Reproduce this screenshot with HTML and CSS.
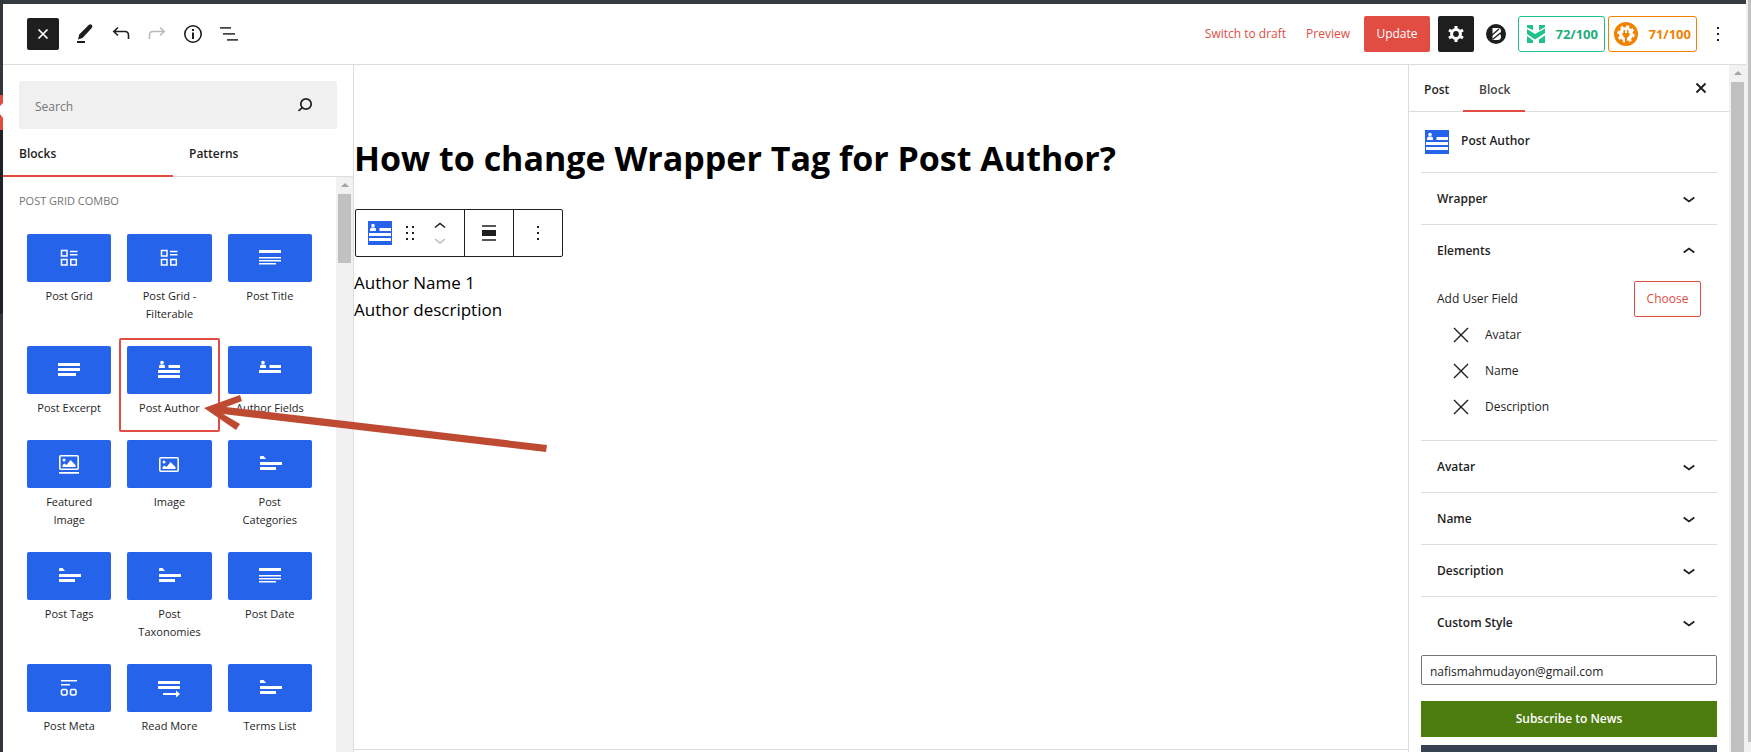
FILE: index.html
```html
<!DOCTYPE html>
<html lang="en">
<head>
<meta charset="utf-8">
<title>Edit Post</title>
<link rel="stylesheet" href="styles.css">
</head>
<body>
<svg class="defs" aria-hidden="true">
  <symbol id="grid" viewBox="0 0 24 24"><path fill="none" stroke="#fff" stroke-width="1.500" d="M4.500 4.500h5.500v5.500h-5.500zM4.500 13.500h5.500v5.500h-5.500zM13.800 13.500h5.500v5.500h-5.500zM13 5.500h7.500M13 8.800h7.500"/></symbol>
  <symbol id="title" viewBox="0 0 24 24"><path fill="#fff" d="M1 4h22v3H1zM1 11h22v1.400H1zM1 14h22v1.400H1zM1 17h17v1.400H1z"/></symbol>
  <symbol id="excerpt" viewBox="0 0 24 24"><path fill="#fff" d="M1 5h22v3H1zM1 10h22v3H1zM1 15h18v3H1z"/></symbol>
  <symbol id="author" viewBox="0 0 24 24"><circle cx="5" cy="4.500" r="1.800" fill="#fff"/><path fill="#fff" d="M2 10V8.500q0-2 2-2h2q2 0 2 2V10zM11.500 7H23v3H11.500zM1 12h22v3H1zM1 17h22v3H1z"/></symbol>
  <symbol id="fields" viewBox="0 0 24 24"><circle cx="5" cy="4.500" r="1.800" fill="#fff"/><path fill="#fff" d="M2 10V8.500q0-2 2-2h2q2 0 2 2V10zM11.500 7H23v3H11.500zM1 12h22v3H1z"/></symbol>
  <symbol id="featured" viewBox="0 0 24 24"><rect x="2.800" y="3.800" width="18.400" height="13.400" rx="1" fill="none" stroke="#fff" stroke-width="1.600"/><circle cx="7" cy="8" r="1.500" fill="#fff"/><path fill="#fff" d="M5.500 15v-2l2-1.500 2 1.500 4-5 5 5v2zM2 20h20v1.800H2z"/></symbol>
  <symbol id="image" viewBox="0 0 24 24"><rect x="2.800" y="5.800" width="18.400" height="13.400" rx="1" fill="none" stroke="#fff" stroke-width="1.600"/><circle cx="7" cy="10" r="1.500" fill="#fff"/><path fill="#fff" d="M5.500 17v-2l2-1.500 2 1.500 4-5 5 5v2z"/></symbol>
  <symbol id="terms" viewBox="0 0 24 24"><path fill="#fff" d="M2 7V5q0-1 1-1h2.500L8 7zM2 10h22v3H2zM2 15h16v3H2z"/></symbol>
  <symbol id="meta" viewBox="0 0 24 24"><path fill="#fff" d="M4 4h16v1.500H4zM4 8h9v1.500H4z"/><path fill="none" stroke="#fff" stroke-width="1.600" d="M5.500 13.500h3.500l1 1v3.500l-1 1h-3.500l-1-1v-3.500zM14.500 13.500h3.500l1 1v3.500l-1 1h-3.500l-1-1v-3.500z"/></symbol>
  <symbol id="more" viewBox="0 0 24 24"><path fill="#fff" d="M1 5h22v3H1zM1 10h22v3H1zM6 17h13v-2.500l4 3.500-4 3.500V19H6z"/></symbol>
  <symbol id="chev" viewBox="0 0 24 24"><path fill="none" stroke="#1e1e1e" stroke-width="1.700" d="M6.700 10.500l5.300 4 5.300-4"/></symbol>
  <symbol id="remove" viewBox="0 0 24 24"><path fill="none" stroke="#1e1e1e" stroke-width="1.400" d="M5 5l14 14M19 5L5 19"/></symbol>
  <symbol id="dots" viewBox="0 0 24 24"><path fill="#1e1e1e" d="M11 5h2v2h-2zM11 11h2v2h-2zM11 17h2v2h-2z"/></symbol>
</svg>
<div class="page">
  <div class="rail"><span class="rail-current"></span><span class="rail-sub"></span></div>
  <div class="editor">
    <header class="header">
      <div class="tools">
        <button class="square" aria-label="Close inserter"><svg viewBox="0 0 24 24" width="24" height="24"><path fill="none" stroke="#fff" stroke-width="1.700" d="M7.500 7.500l9 9M16.500 7.500l-9 9"/></svg></button>
        <button class="tool" aria-label="Tools"><svg viewBox="0 0 24 24" width="24" height="24"><path fill="#1e1e1e" d="M5 17.500l1.200-5L16 2.800q1.300-1 2.800.200 1.200 1.300.200 2.700L9.500 16zM4 19h8v2H4z"/></svg></button>
        <button class="tool" aria-label="Undo"><svg viewBox="0 0 24 24" width="24" height="24"><path fill="none" stroke="#1e1e1e" stroke-width="1.600" d="M9 5.500L4.800 9.500 9 13.500M5 9.500h11q3.500 0 3.500 4V17"/></svg></button>
        <button class="tool faded" aria-label="Redo"><svg viewBox="0 0 24 24" width="24" height="24"><path fill="none" stroke="#1e1e1e" stroke-width="1.600" d="M15 5.500l4.200 4-4.200 4M19 9.500H8q-3.500 0-3.500 4V17"/></svg></button>
        <button class="tool" aria-label="Details"><svg viewBox="0 0 24 24" width="24" height="24"><circle cx="12" cy="12" r="8.200" fill="none" stroke="#1e1e1e" stroke-width="1.600"/><path fill="#1e1e1e" d="M11 7h2v2h-2zM11 10.500h2V17h-2z"/></svg></button>
        <button class="tool" aria-label="List view"><svg viewBox="0 0 24 24" width="24" height="24"><path fill="#444" d="M3 5h11v1.800H3zM6 11h12v1.800H6zM10 17h11v1.800H10z"/></svg></button>
      </div>
      <div class="actions">
        <button class="text-btn">Switch to draft</button>
        <button class="text-btn">Preview</button>
        <button class="update">Update</button>
        <button class="settings" aria-label="Settings"><svg viewBox="0 0 24 24" width="24" height="24"><circle cx="12" cy="12" r="4.400" fill="none" stroke="#fff" stroke-width="3"/><path fill="none" stroke="#fff" stroke-width="3" d="M12 4v3M12 17v3M5 8l2.600 1.500M16.400 14.500L19 16M5 16l2.600-1.500M16.400 9.500L19 8"/></svg></button>
        <button class="bicon" aria-label="Blocks plugin"><svg viewBox="0 0 24 24" width="24" height="24"><circle cx="12" cy="12" r="10" fill="#1e1e1e"/><path fill="#fff" d="M8.500 6H14q3 0 3 3 0 1.800-1.500 2.600 1.500.900 1.500 2.900 0 3.500-3.500 3.500h-5z"/><path fill="none" stroke="#1e1e1e" stroke-width="1.300" d="M7 14l8-7M8.500 17.500l8-6.500"/></svg></button>
        <button class="score green"><svg viewBox="0 0 20 20" width="20" height="20"><path fill="#1fc28b" d="M1 1h6v5L1 3.500zM13 1h6v2l-6 3.500zM1 5l8 5L19 4.500v4.500L9 15.500 1 10zM1 12l6 4.500V19H1zM19 11.500V19h-6v-3.500z"/></svg><span>72/100</span></button>
        <button class="score orange"><svg viewBox="0 0 24 24" width="24" height="24"><circle cx="12" cy="12" r="12" fill="#f18200"/><circle cx="12" cy="12" r="7" fill="#fff"/><circle cx="12" cy="12" r="7.500" fill="none" stroke="#fff" stroke-width="2.500" stroke-dasharray="3 2.890"/><path fill="#f18200" d="M8.500 11h7v2.500l-2.500 2.500V21h-2v-5L8.500 13.500zM9.500 8H11v3H9.500zM13 8h1.500v3H13z"/></svg><span>71/100</span></button>
        <button class="kebab" aria-label="Options"><svg width="24" height="24"><use href="#dots"/></svg></button>
      </div>
    </header>
    <div class="body">
      <aside class="inserter">
        <div class="search">
          <input type="text" placeholder="Search" aria-label="Search">
          <svg viewBox="0 0 24 24" width="24" height="24"><circle cx="13" cy="11" r="5.200" fill="none" stroke="#1e1e1e" stroke-width="1.700"/><path stroke="#1e1e1e" stroke-width="1.700" d="M9.300 14.700L5.500 17.800"/></svg>
        </div>
        <div class="tabs"><button class="tab on">Blocks</button><button class="tab">Patterns</button></div>
        <div class="scroller">
          <div class="blocks">
            <h2>Post Grid Combo</h2>
            <div class="tiles">
              <button class="tile"><span class="pic"><svg width="24" height="24"><use href="#grid"/></svg></span>Post Grid</button>
              <button class="tile"><span class="pic"><svg width="24" height="24"><use href="#grid"/></svg></span>Post Grid - Filterable</button>
              <button class="tile"><span class="pic"><svg width="24" height="24"><use href="#title"/></svg></span>Post Title</button>
              <button class="tile"><span class="pic"><svg width="24" height="24"><use href="#excerpt"/></svg></span>Post Excerpt</button>
              <button class="tile picked"><span class="pic"><svg width="24" height="24"><use href="#author"/></svg></span>Post Author</button>
              <button class="tile"><span class="pic"><svg width="24" height="24"><use href="#fields"/></svg></span>Author Fields</button>
              <button class="tile"><span class="pic"><svg width="24" height="24"><use href="#featured"/></svg></span>Featured<br>Image</button>
              <button class="tile"><span class="pic"><svg width="24" height="24"><use href="#image"/></svg></span>Image</button>
              <button class="tile"><span class="pic"><svg width="24" height="24"><use href="#terms"/></svg></span>Post<br>Categories</button>
              <button class="tile"><span class="pic"><svg width="24" height="24"><use href="#terms"/></svg></span>Post Tags</button>
              <button class="tile"><span class="pic"><svg width="24" height="24"><use href="#terms"/></svg></span>Post<br>Taxonomies</button>
              <button class="tile"><span class="pic"><svg width="24" height="24"><use href="#title"/></svg></span>Post Date</button>
              <button class="tile"><span class="pic"><svg width="24" height="24"><use href="#meta"/></svg></span>Post Meta</button>
              <button class="tile"><span class="pic"><svg width="24" height="24"><use href="#more"/></svg></span>Read More</button>
              <button class="tile"><span class="pic"><svg width="24" height="24"><use href="#terms"/></svg></span>Terms List</button>
            </div>
          </div>
          <div class="bar"><i class="up"></i><i class="thumb short"></i></div>
        </div>
      </aside>
      <main class="canvas">
        <div class="content">
          <h1>How to change Wrapper Tag for Post Author?</h1>
          <div class="toolbar">
            <div class="group first">
              <button class="tb" aria-label="Post Author"><svg class="blue" width="24" height="24"><use href="#author"/></svg></button>
              <button class="tb" aria-label="Drag"><svg viewBox="0 0 12 24" width="12" height="24"><path fill="#1e1e1e" d="M2 5h2v2H2zM8 5h2v2H8zM2 11h2v2H2zM8 11h2v2H8zM2 17h2v2H2zM8 17h2v2H8z"/></svg></button>
              <button class="tb" aria-label="Move"><svg viewBox="0 0 12 24" width="12" height="24"><path fill="none" stroke="#1e1e1e" stroke-width="1.600" d="M1 6.500l5-4 5 4"/><path fill="none" stroke="#bbb" stroke-width="1.600" d="M1 18l5 4 5-4"/></svg></button>
            </div>
            <div class="group"><button class="tb" aria-label="Align"><svg viewBox="0 0 24 24" width="24" height="24"><path fill="#555" d="M5 4h14v2H5zM5 18h14v2H5z"/><path fill="#1e1e1e" d="M5 9h14v6H5z"/></svg></button></div>
            <div class="group"><button class="tb" aria-label="More"><svg width="24" height="24"><use href="#dots"/></svg></button></div>
          </div>
          <p>Author Name 1</p>
          <p>Author description</p>
        </div>
      </main>
      <aside class="side">
        <div class="side-main">
          <div class="side-tabs"><button class="stab">Post</button><button class="stab on">Block</button>
            <button class="close" aria-label="Close settings"><svg viewBox="0 0 24 24" width="24" height="24"><path fill="none" stroke="#1e1e1e" stroke-width="1.900" d="M7.500 7.500l9 9M16.500 7.500l-9 9"/></svg></button></div>
          <div class="card"><svg class="blue" width="24" height="24"><use href="#author"/></svg><h2>Post Author</h2></div>
          <div class="panels">
            <button class="panel">Wrapper<svg width="24" height="24"><use href="#chev"/></svg></button>
            <button class="panel open">Elements<svg class="flip" width="24" height="24"><use href="#chev"/></svg></button>
            <div class="fields">
              <div class="add"><span>Add User Field</span><button class="choose">Choose</button></div>
              <div class="field"><button aria-label="Remove Avatar"><svg width="24" height="24"><use href="#remove"/></svg></button>Avatar</div>
              <div class="field"><button aria-label="Remove Name"><svg width="24" height="24"><use href="#remove"/></svg></button>Name</div>
              <div class="field"><button aria-label="Remove Description"><svg width="24" height="24"><use href="#remove"/></svg></button>Description</div>
            </div>
            <button class="panel">Avatar<svg width="24" height="24"><use href="#chev"/></svg></button>
            <button class="panel">Name<svg width="24" height="24"><use href="#chev"/></svg></button>
            <button class="panel">Description<svg width="24" height="24"><use href="#chev"/></svg></button>
            <button class="panel">Custom Style<svg width="24" height="24"><use href="#chev"/></svg></button>
            <input class="mail" type="email" value="nafismahmudayon@gmail.com" aria-label="Email">
            <button class="subscribe">Subscribe to News</button>
            <div class="promo"></div>
          </div>
        </div>
        <div class="bar"><i class="up"></i><i class="thumb"></i></div>
      </aside>
    </div>
  </div>
  <div class="page-bar"><i></i></div>
  <svg class="arrow" viewBox="0 0 350 60" width="350" height="60" aria-hidden="true"><path fill="#bf4a32" d="M4 13L40 0l2 6-16 6L347 50l-1 7L23 19l17 10-4 6z"/></svg>
</div>
</body>
</html>
```
FILE: styles.css
```css
* { box-sizing: border-box; }
body { margin: 0; background: #fff; color: #1e1e1e; font: 12px/18px "Open Sans", "Noto Sans", sans-serif; }
button, input { font: inherit; color: inherit; }
button { border: 0; padding: 0; background: none; }
svg { display: block; flex: none; }
h1, h2, p { margin: 0; }
.defs { position: absolute; width: 0; height: 0; }
.page { position: relative; display: flex; height: 100vh; overflow: hidden; }
.rail { width: 3px; background: #32373c; padding-top: 95px; }
.rail-current { display: block; height: 35px; background: #e14d43; }
.rail-current::before { content: ""; display: block; height: 100%; background: #fff; clip-path: polygon(0 11px, 100% 8px, 100% 23px, 0 19px); }
.rail-sub { display: block; height: 184px; background: #1f2327; }
.editor { flex: 1; min-width: 0; display: flex; flex-direction: column; border-top: 4px solid #363b3f; }
.header { height: 61px; flex: none; display: flex; justify-content: space-between; align-items: center; padding: 0 16px 0 24px; border-bottom: 1px solid #ddd; }
.tools, .actions { display: flex; align-items: center; }
.tools { gap: 12px; }
.square { width: 32px; height: 32px; display: grid; place-items: center; background: #1e1e1e; border-radius: 2px; margin-right: 2px; }
.faded { opacity: .3; }
.text-btn { color: #e14d43; margin-right: 20px; }
.update { width: 66px; height: 36px; background: #e14d43; color: #fff; border-radius: 2px; margin: 0 8px 0 -6px; }
.settings { width: 36px; height: 36px; display: grid; place-items: center; background: #1e1e1e; border-radius: 2px; margin-right: 10px; }
.bicon { margin-right: 10px; }
.score { height: 36px; display: flex; align-items: center; border: 1px solid; border-radius: 3px; font-weight: 700; font-size: 13px; justify-content: space-between; }
.green { width: 87px; padding: 0 6px 0 7px; color: #1fae7c; border-color: #1fc28b; margin-right: 3px; }
.orange { width: 89px; padding: 0 5px; color: #f18200; margin-right: 9px; }
.body { flex: 1; min-height: 0; display: flex; }
.inserter { width: 351px; border-right: 1px solid #ddd; display: flex; flex-direction: column; }
.search { margin: 16px 16px 0; height: 48px; display: flex; align-items: center; background: #f0f0f0; border-radius: 2px; padding: 0 20px 0 16px; }
.search input { flex: 1; min-width: 0; border: 0; padding: 3px 0 0; background: none; outline: 0; }
.search input::placeholder { color: #757575; opacity: 1; }
.tabs { height: 48px; display: flex; border-bottom: 1px solid #ddd; }
.tab { width: 170px; margin-bottom: -1px; padding: 2px 0 0 16px; text-align: left; font-weight: 600; }
.tab.on { padding-top: 4px; border-bottom: 2px solid #e14d43; }
.scroller { flex: 1; min-height: 0; display: flex; overflow: hidden; }
.blocks { flex: 1; padding: 16px 16px 0; }
.blocks h2 { font-size: 11px; line-height: 16px; font-weight: 500; color: #757575; text-transform: uppercase; }
.tiles { display: grid; grid-template-columns: repeat(3, 1fr); margin-top: 17px; }
.tile { display: flex; flex-direction: column; justify-content: flex-start; align-items: center; padding: 8px 8px 15px; border-radius: 2px; text-align: center; font-size: 11px; }
.picked { outline: 2px solid #e14d43; outline-offset: -2px; }
.pic { width: 100%; height: 48px; display: grid; place-items: center; background: #2563eb; border-radius: 2px; margin-bottom: 5px; }
.bar { width: 17px; flex: none; background: #f1f1f1; display: flex; flex-direction: column; padding: 0 2px; }
.up { align-self: center; margin: 6px 0 7px; border: 4px solid transparent; border-top-width: 0; border-bottom-color: #a3a3a3; }
.thumb { flex: 1; background: #c1c1c1; }
.thumb.short { flex: none; height: 69px; }
.canvas { flex: 1; min-width: 0; padding-bottom: 2px; display: flex; flex-direction: column; }
.content { flex: 1; padding-top: 68px; border-bottom: 1px solid #ddd; color: #000; }
h1 { font-size: 34px; line-height: 50px; font-weight: 700; }
.toolbar { width: max-content; height: 48px; display: flex; border: 1px solid #1e1e1e; border-radius: 2px; margin: 26px 0 12px 1px; }
.group { width: 49px; display: flex; align-items: center; justify-content: center; border-left: 1px solid #1e1e1e; }
.group.first { width: 108px; justify-content: flex-start; gap: 12px; padding-left: 12px; border: 0; }
.group.first .tb + .tb + .tb { margin-left: 6px; }
.blue { background: #2563eb; }
.content p { font-size: 17px; line-height: 27px; }
.side { width: 338px; border-left: 1px solid #ddd; display: flex; overflow: hidden; }
.side-main { flex: 1; min-width: 0; }
.side-tabs { height: 47px; display: flex; border-bottom: 1px solid #ddd; }
.stab { font-weight: 600; padding: 2px 14px 0 15px; margin-bottom: -1px; }
.stab.on { width: 62px; padding-top: 4px; border-bottom: 2px solid #e14d43; color: #444; }
.close { margin: 0 16px 0 auto; }
.card { display: flex; gap: 12px; padding: 18px 16px; height: 60px; }
.card h2 { font-size: 12px; line-height: 22px; font-weight: 600; }
.panels { margin: 0 12px; }
.panel { width: 100%; height: 52px; display: flex; align-items: center; justify-content: space-between; padding: 1px 16px 0; border-top: 1px solid #ddd; font-weight: 600; }
.flip { transform: scaleY(-1); }
.fields { padding: 5px 16px 15px; height: 164px; }
.add { display: flex; justify-content: space-between; align-items: center; }
.choose { width: 67px; height: 36px; border: 1px solid #e14d43; border-radius: 2px; color: #e14d43; }
.field { display: flex; align-items: center; gap: 12px; height: 36px; padding-left: 12px; }
.mail { display: block; width: 100%; height: 30px; margin-top: 7px; padding: 2px 8px 0; border: 1px solid #757575; border-radius: 2px; background: #fff; }
.subscribe { display: block; width: 100%; height: 36px; margin: 16px 0 8px; background: #4d7c0f; color: #fff; font-weight: 600; }
.promo { height: 36px; background: #374151; }
.page-bar { width: 5px; padding-left: 2px; background: #f1f1f1; }
.page-bar i { display: block; height: calc(100% - 10px); background: #c1c1c1; }
.arrow { position: absolute; left: 200px; top: 395px; }
```
